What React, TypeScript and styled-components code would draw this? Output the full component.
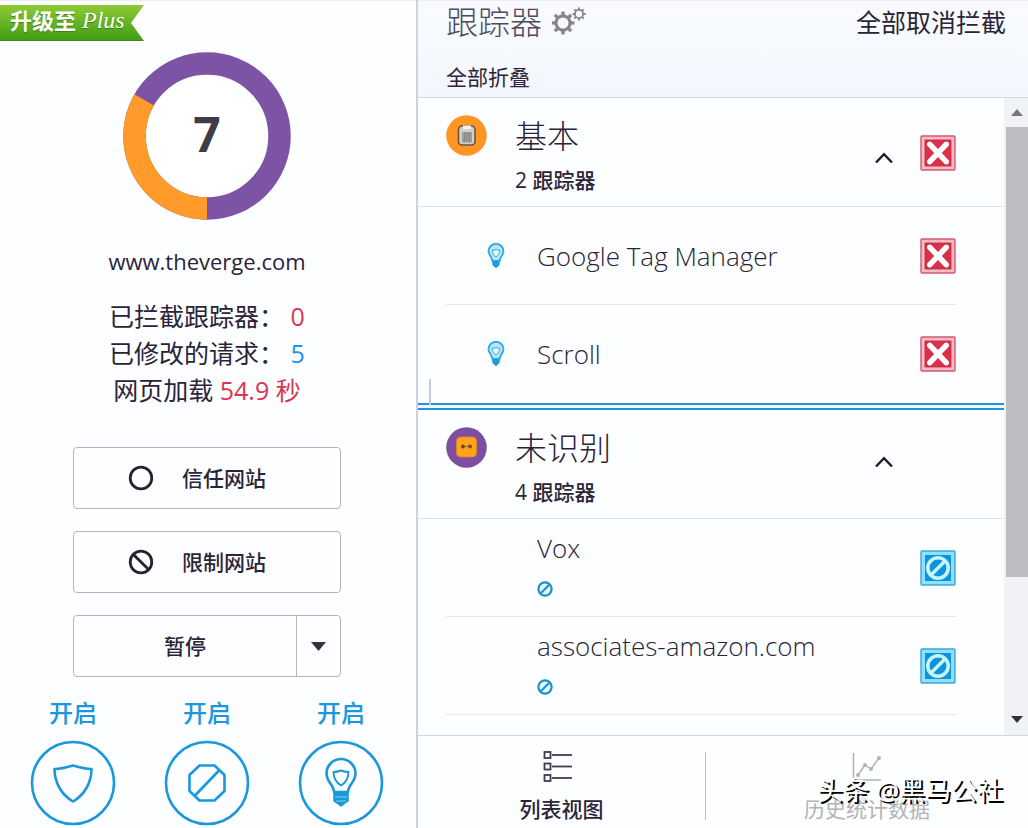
import React from "react";
import styled, { createGlobalStyle } from "styled-components";

const Global = createGlobalStyle`
  *, *::before, *::after { box-sizing: border-box; }
  body {
    margin: 0;
    background: #fcfeff;
    color: #2b2438;
    font-family: "Open Sans", "Noto Sans CJK SC", sans-serif;
  }
  button {
    font: inherit;
    color: inherit;
    padding: 0;
    margin: 0;
    border: 0;
    background: none;
    cursor: pointer;
  }
  svg { display: block; flex: none; }
`;

const BLUE = "#1b97dc";

const Panel = styled.div`
  display: flex;
  height: 100vh;
  overflow: hidden;
`;

const Summary = styled.aside`
  flex: none;
  width: 418px;
  display: flex;
  flex-direction: column;
  align-items: center;
  padding-right: 2px;
  border-right: 2px solid #cdd2e2;
  box-shadow: inset 0 2px 0 -1px #e9eff5;
`;

const Ribbon = styled.a`
  align-self: flex-start;
  display: flex;
  align-items: center;
  gap: 6px;
  width: 144px;
  height: 36px;
  margin-top: 5px;
  padding: 0 0 6px 10px;
  color: #fff;
  font-size: 22px;
  font-weight: 700;
  line-height: 30px;
  white-space: nowrap;
  text-decoration: none;
  text-shadow: 0 1px 1px #3b7d14;
  background: linear-gradient(#8fcb35, #3f9d15);
  border-bottom: 1px solid #3b8a1c;
  clip-path: polygon(0 0, 100% 0, 131px 50%, 100% 100%, 0 100%);
`;

const RibbonScript = styled.em`
  font-family: "Liberation Serif", serif;
  font-size: 24px;
  font-weight: 400;
`;

const Donut = styled.div`
  display: grid;
  place-items: center;
  margin-top: 11px;
  > * { grid-area: 1 / 1; }
`;

const Count = styled.strong`
  font-size: 48px;
  line-height: 60px;
  font-weight: 700;
  color: #3f3c45;
  padding-bottom: 4px;
`;

const Site = styled.div`
  margin-top: 25px;
  font-size: 22px;
  line-height: 32px;
`;

const Stats = styled.div`
  display: flex;
  flex-direction: column;
  align-items: center;
  margin-top: 21px;
  font-size: 25px;
  line-height: 37px;
  white-space: nowrap;
`;

const Value = styled.span<{ $tone: "red" | "blue" }>`
  color: ${(p) => (p.$tone === "red" ? "#dc3550" : "#1b97ec")};
`;

const Actions = styled.div`
  display: flex;
  flex-direction: column;
  gap: 22px;
  width: 268px;
  margin-top: 38px;
  font-size: 21px;
  font-weight: 500;
  line-height: 30px;
`;

const ActionButton = styled.button`
  display: flex;
  align-items: center;
  gap: 28px;
  height: 62px;
  padding-left: 54px;
  border: 1px solid #b3b6c0;
  border-radius: 4px;
  background: #fdfeff;
`;

const SplitButton = styled.div`
  display: flex;
  height: 62px;
  border: 1px solid #b3b6c0;
  border-radius: 4px;
  background: #fdfeff;
`;

const PauseButton = styled.button`
  flex: 1;
`;

const DropButton = styled.button`
  display: grid;
  place-items: center;
  width: 44px;
  border-left: 1px solid #b3b6c0;
`;

const Features = styled.div`
  display: flex;
  gap: 48px;
  margin-top: 20px;
`;

const Feature = styled.button`
  display: flex;
  flex-direction: column;
  align-items: center;
  gap: 11px;
  width: 86px;
  color: ${BLUE};
  font-size: 24px;
  font-weight: 500;
  line-height: 32px;
`;

const Trackers = styled.main`
  flex: 1;
  min-width: 0;
  display: flex;
  flex-direction: column;
`;

const Header = styled.header`
  flex: none;
  padding: 0 22px 0 28px;
  height: 98px;
  border-bottom: 1px solid #d3dae6;
  background: linear-gradient(#f9fbfe, #f3f6fc);
  box-shadow: inset 0 2px 0 -1px #e9eff5;
`;

const HeaderLine = styled.div`
  display: flex;
  align-items: center;
  height: 44px;
`;

const Title = styled.h1`
  margin: 0 10px 0 0;
  font-size: 32px;
  font-weight: 300;
  line-height: 44px;
  color: #4b4a60;
`;

const UnblockAll = styled.button`
  margin-left: auto;
  font-size: 25px;
  line-height: 36px;
`;

const CollapseAll = styled.button`
  display: block;
  margin-top: 18px;
  font-size: 21px;
  line-height: 30px;
`;

const Scroller = styled.div`
  flex: 1;
  min-height: 0;
  display: flex;
`;

const List = styled.div`
  flex: 1;
  min-width: 0;
  overflow: hidden;
`;

const Scrollbar = styled.div`
  flex: none;
  width: 24px;
  display: flex;
  flex-direction: column;
  align-items: center;
  padding: 11px 0 12px 2px;
  background: #f1f2f5;
`;

const Thumb = styled.div`
  width: 100%;
  height: 450px;
  margin: 11px 0 auto;
  background: #bdbec1;
`;

const CategoryHead = styled.div`
  display: flex;
  align-items: flex-start;
  height: 109px;
  padding: 17px 48px 0 28px;
  border-bottom: 1px solid #dde3ec;
`;

const CategoryText = styled.div`
  flex: 1;
  margin-left: 28px;
`;

const CategoryName = styled.h2`
  margin: 0;
  font-size: 32px;
  font-weight: 300;
  line-height: 42px;
`;

const CategoryCount = styled.div`
  font-size: 21px;
  font-weight: 500;
  line-height: 46px;
`;

const Fold = styled.button<{ $raised?: boolean }>`
  padding: ${(p) => (p.$raised ? "28px" : "36px")} 0 0;
`;

const Toggle = styled.button`
  width: 36px;
  height: 36px;
`;

const HeadToggle = styled.div`
  width: 36px;
  margin: 20px 0 0 26px;
`;

const TrackerList = styled.ul`
  list-style: none;
  margin: 0;
  padding: 0 48px 0 28px;
`;

const TrackerRow = styled.li`
  display: flex;
  align-items: center;
  height: 98px;
  border-bottom: 1px solid #e3e7ed;
  &:last-child { border-bottom-color: transparent; }
`;

const BulbSlot = styled.span`
  width: 91px;
  padding-left: 41px;
`;

const TrackerName = styled.div`
  flex: 1;
  display: flex;
  flex-direction: column;
  font-size: 26px;
  font-weight: 300;
  line-height: 34px;
`;

const Note = styled.span`
  padding: 16px 0 8px;
`;

const Divider = styled.div`
  position: relative;
  height: 7px;
  border: solid #2a8fd0;
  border-width: 2px 0;
  background: #e6fbff;
`;

const Caret = styled.span`
  position: absolute;
  left: 11px;
  bottom: 3px;
  width: 2px;
  height: 26px;
  background: #c3cbd8;
`;

const Footer = styled.footer`
  position: relative;
  flex: none;
  display: flex;
  height: 93px;
  border-top: 1px solid #cfd8e4;
`;

const Tab = styled.button<{ $muted?: boolean }>`
  flex: ${(p) => (p.$muted ? "322" : "287")};
  display: flex;
  flex-direction: column;
  align-items: center;
  gap: 11px;
  padding-top: 15px;
  color: ${(p) => (p.$muted ? "#b3b3b8" : "#2b2438")};
  font-size: 21px;
  font-weight: ${(p) => (p.$muted ? 400 : 500)};
  line-height: 30px;
`;

const TabRule = styled.div`
  width: 1px;
  height: 68px;
  margin-top: 16px;
  background: #bfc0c8;
`;

const Watermark = styled.div`
  position: absolute;
  right: 25px;
  top: 35px;
  color: #fff;
  font-size: 26px;
  line-height: 38px;
  white-space: nowrap;
  text-shadow: 2px 2px 0 #000;
`;

function DonutChart() {
  return (
    <svg width="168" height="168" viewBox="-84 -84 168 168">
      <circle r="72.5" fill="#fff" stroke="#7d53a5" strokeWidth="22.5" />
      <path d="M0 72.5A72.5 72.5 0 0 1 -62.8 -36.2" fill="none" stroke="#ff9a2b" strokeWidth="22.5" />
    </svg>
  );
}

function Ring({ slash }: { slash?: boolean }) {
  return (
    <svg width="26" height="26" viewBox="0 0 26 26" fill="none" stroke="#26222e" strokeWidth="2.8">
      <circle cx="13" cy="13" r="10.8" />
      {slash && <path d="M5.4 5.4l15.2 15.2" />}
    </svg>
  );
}

function FeatureIcon({ kind }: { kind: "shield" | "stop" | "bulb" }) {
  return (
    <svg width="86" height="86" viewBox="0 0 86 86" fill="none" stroke={BLUE} strokeWidth="2.6" strokeLinejoin="round">
      <circle cx="43" cy="43" r="41" />
      {kind === "shield" && <path d="M43 25.5C48 27 55 29 61.5 29C61.5 42 55 54.5 43 61.5C31 54.5 24.5 42 24.5 29C31 29 38 27 43 25.5z" />}
      {kind === "stop" && (
        <>
          <path d="M35.5 25.5H50.5L60.5 35V51L50.5 60.5H35.5L25.5 51V35z" />
          <path d="M31 55.5L55 30.5" />
        </>
      )}
      {kind === "bulb" && (
        <>
          <path d="M36 52C36 45 28.5 42 28.5 33.5a14.5 14.5 0 0 1 29 0C57.5 42 50 45 50 52z" />
          <path d="M43 30.5c3 1.2 5 1.5 7.5 1.5 0 6-2.5 10.5-7.5 13.5-5-3-7.5-7.5-7.5-13.5 2.5 0 4.5-.3 7.5-1.5z" strokeWidth="1.9" />
          <path d="M36 53h14v8l-3 2-4 3-4-3-3-2z" fill={BLUE} strokeWidth="1.5" />
          <path d="M37 57h12M38 61h10" stroke="#7cd4f5" strokeWidth="1" />
        </>
      )}
    </svg>
  );
}

function Gear({ x, y, r }: { x: number; y: number; r: number }) {
  const teeth = [0, 45, 90, 135, 180, 225, 270, 315];
  return (
    <g transform={`translate(${x} ${y})`} stroke="#85858a" fill="none">
      <circle r={r * 0.68} strokeWidth={r * 0.3} />
      {teeth.map((a) => (
        <path key={a} d={`M0 ${-r * 0.75}V${-r * 1.1}`} strokeWidth={r * 0.32} transform={`rotate(${a})`} />
      ))}
    </g>
  );
}

function Gears() {
  return (
    <svg width="36" height="30" viewBox="0 0 36 30">
      <Gear x={11} y={16} r={10.4} />
      <Gear x={27} y={7} r={6} />
    </svg>
  );
}

function Badge({ kind }: { kind: "essential" | "unknown" }) {
  return kind === "essential" ? (
    <svg width="41" height="41" viewBox="0 0 41 41">
      <circle cx="20.5" cy="20.5" r="20.3" fill="#ff9524" />
      <rect x="12.5" y="11" width="16.5" height="19" rx="3.5" fill="#cfd2cc" stroke="#6d5540" strokeWidth="1.6" />
      <path d="M17 10.5h8v3.5h-8z" fill="#f5f3ec" />
      <path d="M16 17h10v10.5H16z" fill="#9a9f9c" />
      <path d="M18.5 17v10M21 17v10M23.5 17v10" stroke="#7e8381" strokeWidth=".8" />
    </svg>
  ) : (
    <svg width="41" height="41" viewBox="0 0 41 41">
      <circle cx="20.5" cy="20.5" r="20.3" fill="#7d4fa3" />
      <rect x="10.5" y="10" width="20" height="20" rx="4" fill="#ffa31c" stroke="#d98232" />
      <circle cx="17" cy="19.5" r="1.9" fill="#6d4526" />
      <circle cx="24" cy="19.5" r="1.9" fill="#6d4526" />
      <path d="M19 19.5h7" stroke="#8e5a26" strokeWidth=".8" />
    </svg>
  );
}

function Bulb() {
  return (
    <svg width="18" height="26" viewBox="0 0 18 26" fill="none" stroke="#35a8e0">
      <path d="M5.5 18.5C5.5 14 1.5 12.5 1.5 8.3a7.5 7.5 0 0 1 15 0C16.5 12.5 12.5 14 12.5 18.5z" fill="#b5e6f9" strokeWidth="1.8" />
      <path d="M9 6.5c1.5.6 2.5.8 3.8.8 0 3-1.3 5-3.8 6.5-2.5-1.5-3.8-3.5-3.8-6.5C6.5 7.3 7.5 7.1 9 6.5z" fill="#e6f8fe" strokeWidth="1" />
      <path d="M5.8 17.5h6.4v4.5L9 24.8 5.8 22z" fill="#1f9bdc" strokeWidth="1" />
    </svg>
  );
}

function Chevron() {
  return (
    <svg width="20" height="14" viewBox="0 0 20 14" fill="none" stroke="#221d2b" strokeWidth="2.5">
      <path d="M2 11.5L10 3.2L18 11.5" />
    </svg>
  );
}

function BlockedIcon() {
  return (
    <svg width="36" height="36" viewBox="0 0 36 36">
      <rect x="1" y="1" width="34" height="34" rx="1" fill="#fbb9c6" stroke="#cf5a70" strokeWidth="1.4" />
      <rect x="5" y="5" width="26" height="26" fill="#dc2f48" stroke="#b52c42" strokeWidth=".8" />
      <path d="M9.8 9.3L26.2 26.7M26.2 9.3L9.8 26.7" stroke="#fff" strokeWidth="5.5" strokeLinecap="round" />
    </svg>
  );
}

function RestrictedIcon() {
  return (
    <svg width="36" height="36" viewBox="0 0 36 36" fill="none">
      <rect x="1" y="1" width="34" height="34" rx="1" fill="#8fe0fb" stroke="#3fa5d3" strokeWidth="1.4" />
      <rect x="5" y="5" width="26" height="26" fill="#0f93dc" />
      <circle cx="18" cy="18" r="10.2" stroke="#c6f6fd" strokeWidth="3.6" />
      <path d="M11.5 24.5L24.5 11.5" stroke="#c6f6fd" strokeWidth="3.3" />
    </svg>
  );
}

function SmallStop() {
  return (
    <svg width="16" height="16" viewBox="0 0 16 16" fill="#e4f9ff" stroke="#1c8fcd" strokeWidth="2.2">
      <circle cx="8" cy="8" r="6.6" />
      <path d="M4 12L12 4" />
    </svg>
  );
}

function Arrow({ up, wide }: { up?: boolean; wide?: boolean }) {
  const w = wide ? 15 : 12;
  const h = wide ? 9 : 7;
  return (
    <svg width={w} height={h} viewBox="0 0 12 7" preserveAspectRatio="none">
      <path d={up ? "M0 7L6 0L12 7z" : "M0 0L6 7L12 0z"} fill={up ? "#77777b" : "#36323b"} />
    </svg>
  );
}

function ListIcon() {
  return (
    <svg width="38" height="32" viewBox="0 0 38 32" fill="none" stroke="#453a52" strokeWidth="1.8">
      {[1, 12.5, 24].map((y) => (
        <React.Fragment key={y}>
          <rect x="1.5" y={y} width="6" height="6" />
          <path d={`M9 ${y + 3}H29`} />
        </React.Fragment>
      ))}
    </svg>
  );
}

function ChartIcon() {
  return (
    <svg width="30" height="32" viewBox="0 0 30 32" fill="none" stroke="#b3b3b8" strokeWidth="1.5">
      <path d="M1.5 2V29H29" />
      <path d="M6 24L13 14L19 18L27 7" />
      {[[6, 24], [13, 14], [19, 18], [27, 7]].map(([x, y]) => (
        <circle key={x} cx={x} cy={y} r="1.2" fill="#b3b3b8" />
      ))}
    </svg>
  );
}

const features: Array<"shield" | "stop" | "bulb"> = ["shield", "stop", "bulb"];

export default function App() {
  return (
    <>
      <Global />
      <Panel>
        <Summary>
          <Ribbon href="#plus">
            升级至<RibbonScript>Plus</RibbonScript>
          </Ribbon>
          <Donut>
            <DonutChart />
            <Count>7</Count>
          </Donut>
          <Site>www.theverge.com</Site>
          <Stats>
            <div>已拦截跟踪器： <Value $tone="red">0</Value></div>
            <div>已修改的请求： <Value $tone="blue">5</Value></div>
            <div>网页加载 <Value $tone="red">54.9 秒</Value></div>
          </Stats>
          <Actions>
            <ActionButton><Ring />信任网站</ActionButton>
            <ActionButton><Ring slash />限制网站</ActionButton>
            <SplitButton>
              <PauseButton>暂停</PauseButton>
              <DropButton aria-label="暂停选项"><Arrow wide /></DropButton>
            </SplitButton>
          </Actions>
          <Features>
            {features.map((kind) => (
              <Feature key={kind}>开启<FeatureIcon kind={kind} /></Feature>
            ))}
          </Features>
        </Summary>

        <Trackers>
          <Header>
            <HeaderLine>
              <Title>跟踪器</Title>
              <Gears />
              <UnblockAll>全部取消拦截</UnblockAll>
            </HeaderLine>
            <CollapseAll>全部折叠</CollapseAll>
          </Header>

          <Scroller>
            <List>
              <CategoryHead>
                <Badge kind="essential" />
                <CategoryText>
                  <CategoryName>基本</CategoryName>
                  <CategoryCount>2 跟踪器</CategoryCount>
                </CategoryText>
                <Fold aria-label="折叠"><Chevron /></Fold>
                <HeadToggle><Toggle aria-label="拦截"><BlockedIcon /></Toggle></HeadToggle>
              </CategoryHead>
              <TrackerList>
                {["Google Tag Manager", "Scroll"].map((name) => (
                  <TrackerRow key={name}>
                    <BulbSlot><Bulb /></BulbSlot>
                    <TrackerName>{name}</TrackerName>
                    <Toggle aria-label="拦截"><BlockedIcon /></Toggle>
                  </TrackerRow>
                ))}
              </TrackerList>
              <Divider><Caret /></Divider>
              <CategoryHead>
                <Badge kind="unknown" />
                <CategoryText>
                  <CategoryName>未识别</CategoryName>
                  <CategoryCount>4 跟踪器</CategoryCount>
                </CategoryText>
                <Fold $raised aria-label="折叠"><Chevron /></Fold>
                <HeadToggle />
              </CategoryHead>
              <TrackerList>
                {["Vox", "associates-amazon.com", ""].map((name) => (
                  <TrackerRow key={name}>
                    {name && (
                      <>
                        <BulbSlot />
                        <TrackerName>{name}<Note><SmallStop /></Note></TrackerName>
                        <Toggle aria-label="限制"><RestrictedIcon /></Toggle>
                      </>
                    )}
                  </TrackerRow>
                ))}
              </TrackerList>
            </List>
            <Scrollbar>
              <Arrow up />
              <Thumb />
              <Arrow />
            </Scrollbar>
          </Scroller>

          <Footer>
            <Tab><ListIcon />列表视图</Tab>
            <TabRule />
            <Tab $muted><ChartIcon />历史统计数据</Tab>
            <Watermark>头条 @黑马公社</Watermark>
          </Footer>
        </Trackers>
      </Panel>
    </>
  );
}
